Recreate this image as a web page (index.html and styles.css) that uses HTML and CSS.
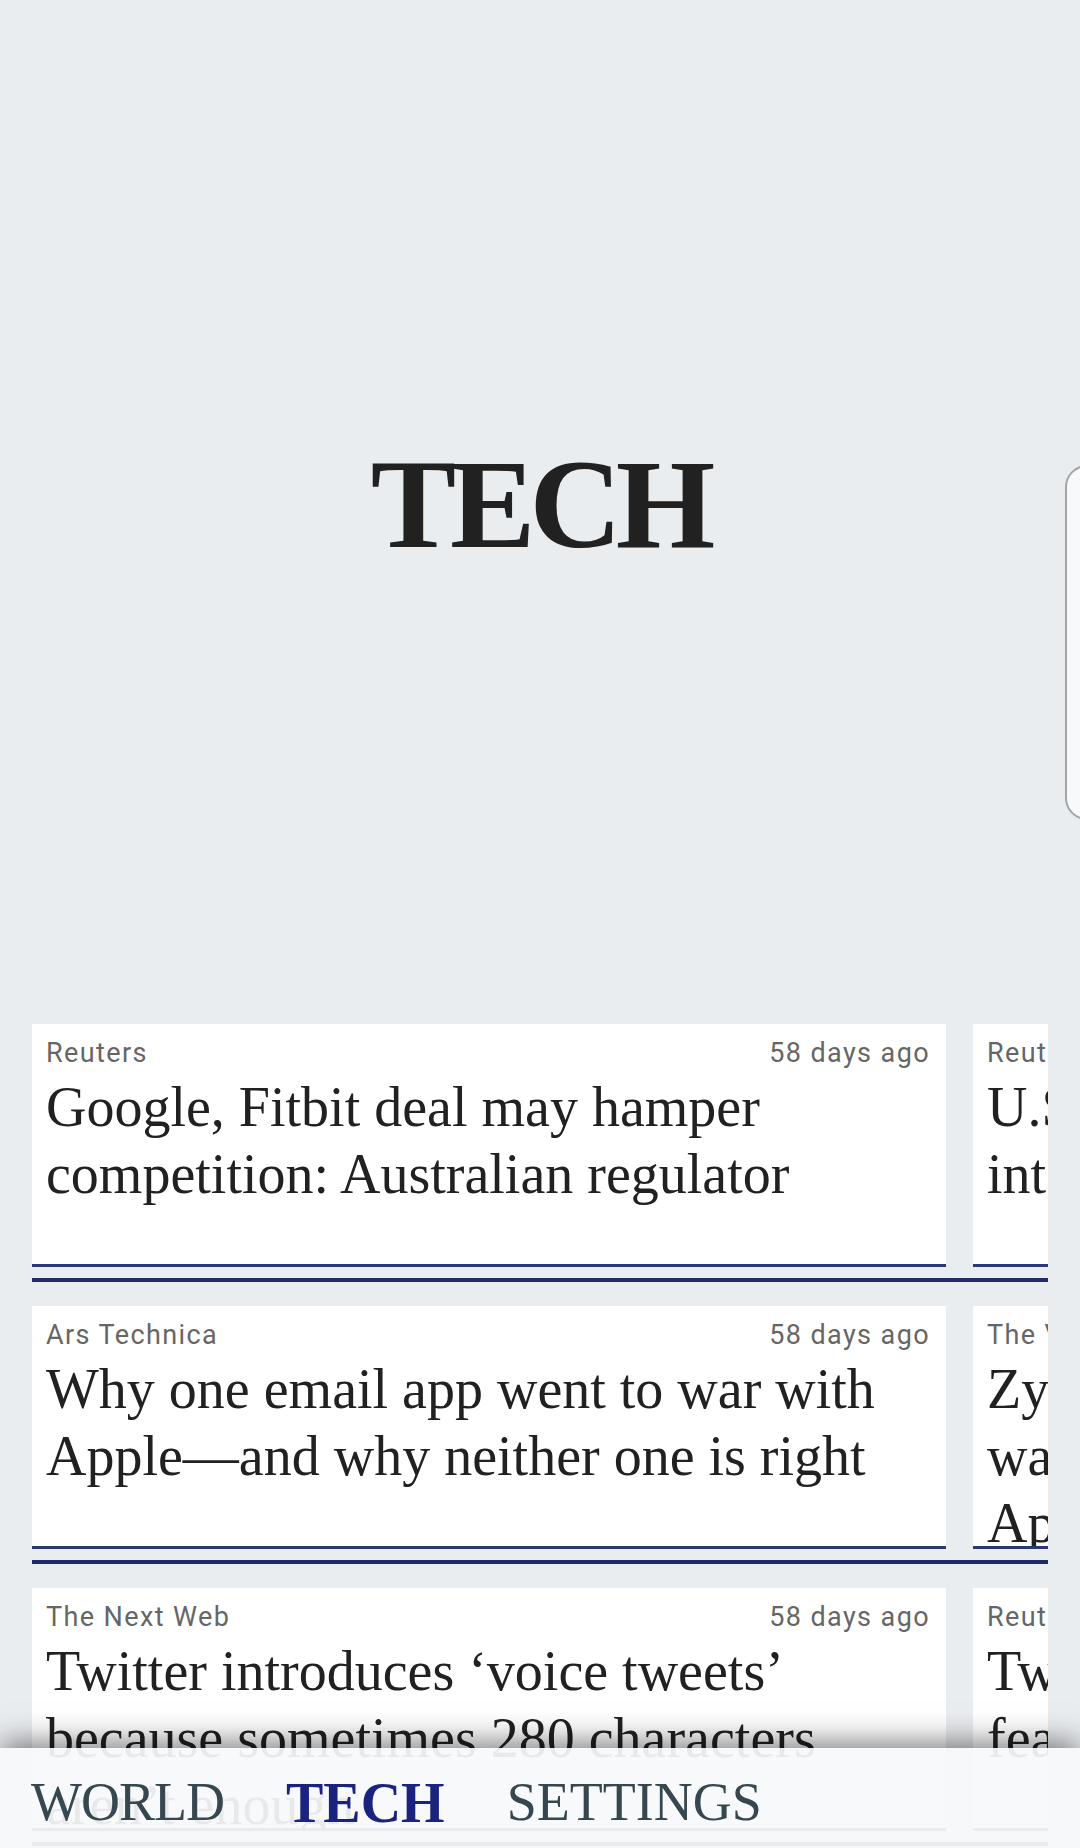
FILE: index.html
```html
<!DOCTYPE html>
<html lang="en">
<head>
<meta charset="utf-8">
<title>Tech</title>
<link rel="stylesheet" href="styles.css">
</head>
<body>
<div class="page">
  <header class="hero">
    <h1 class="hero-title">TECH</h1>
  </header>
  <aside class="drawer-handle"></aside>

  <main class="feed">
    <section class="row">
      <article class="card">
        <div class="meta"><span>Reuters</span><span>58 days ago</span></div>
        <h2 class="headline">Google, Fitbit deal may hamper competition: Australian regulator</h2>
      </article>
      <article class="card">
        <div class="meta"><span>Reuters</span><span>58 days ago</span></div>
        <h2 class="headline">U.S. lawmakers question Google over<br>internal data practices</h2>
      </article>
    </section>

    <section class="row">
      <article class="card">
        <div class="meta"><span>Ars Technica</span><span>58 days ago</span></div>
        <h2 class="headline">Why one email app went to war with Apple—and why neither one is right</h2>
      </article>
      <article class="card">
        <div class="meta"><span>The Verge</span><span>58 days ago</span></div>
        <h2 class="headline">Zynga says its new mobile title<br>was built to launch on<br>Apple Arcade first</h2>
      </article>
    </section>

    <section class="row last">
      <article class="card">
        <div class="meta"><span>The Next Web</span><span>58 days ago</span></div>
        <h2 class="headline">Twitter introduces ‘voice tweets’ because sometimes 280 characters aren’t enough</h2>
      </article>
      <article class="card">
        <div class="meta"><span>Reuters</span><span>58 days ago</span></div>
        <h2 class="headline">Twitter tests voice tweets as a new<br>feature for iOS users</h2>
      </article>
    </section>
  </main>

  <nav class="bottom-nav">
    <a class="nav-item world">WORLD</a>
    <a class="nav-item active">TECH</a>
    <a class="nav-item settings">SETTINGS</a>
  </nav>
</div>
</body>
</html>
```

FILE: styles.css
```css
html, body {
  margin: 0;
  padding: 0;
  overflow: hidden;
}

body {
  background: #eaedf0;
  font-family: "Liberation Serif", "DejaVu Serif", serif;
  color: #212121;
}

.page {
  position: relative;
  width: 1080px;
  min-height: 1848px;
  overflow: hidden;
}

.hero {
  height: 1008px;
  display: flex;
  align-items: center;
  justify-content: center;
}

.hero-title {
  margin: 0;
  font-family: "Liberation Serif", serif;
  font-weight: 700;
  font-size: 128px;
  line-height: 1;
  letter-spacing: -6px;
  color: #212121;
}

.drawer-handle {
  position: absolute;
  left: 1065px;
  top: 465px;
  width: 60px;
  height: 351px;
  border: 2px solid #a2a4a6;
  border-radius: 22px;
  background: #f8f9fa;
}

.feed {
  padding-top: 16px;
}

.row {
  display: flex;
  gap: 27px;
  width: 1016px;
  margin: 0 0 24px 32px;
  padding-bottom: 11px;
  border-bottom: 4px solid #1f2a68;
  overflow: hidden;
}

.row.last {
  margin-bottom: 0;
}

.card {
  flex: 0 0 914px;
  height: 243px;
  box-sizing: border-box;
  padding: 13px 16px 0 14px;
  background: #ffffff;
  border-bottom: 3px solid #2c3874;
  overflow: hidden;
}

.meta {
  display: flex;
  justify-content: space-between;
  font-family: Roboto, "Liberation Sans", sans-serif;
  font-size: 27px;
  line-height: 32px;
  letter-spacing: 1.4px;
  color: #666666;
}

.headline {
  margin: 5px 0 0 0;
  font-family: "Liberation Serif", serif;
  font-weight: 400;
  font-size: 56px;
  line-height: 67px;
  color: #212121;
}

.bottom-nav {
  position: fixed;
  left: 0;
  bottom: 0;
  width: 1080px;
  height: 100px;
  box-sizing: border-box;
  padding: 27px 0 0 31px;
  display: flex;
  align-items: flex-start;
  gap: 62px;
  background: rgba(248, 249, 250, 0.93);
  box-shadow: 0 -8px 28px -2px rgba(0, 0, 0, 0.5);
}

.nav-item {
  font-family: "Liberation Serif", serif;
  font-size: 54px;
  line-height: 1;
  color: #37474f;
  text-decoration: none;
}

.nav-item.world {
  letter-spacing: -1px;
}

.nav-item.active {
  font-weight: 700;
  font-size: 56px;
  color: #1a237e;
}
```
